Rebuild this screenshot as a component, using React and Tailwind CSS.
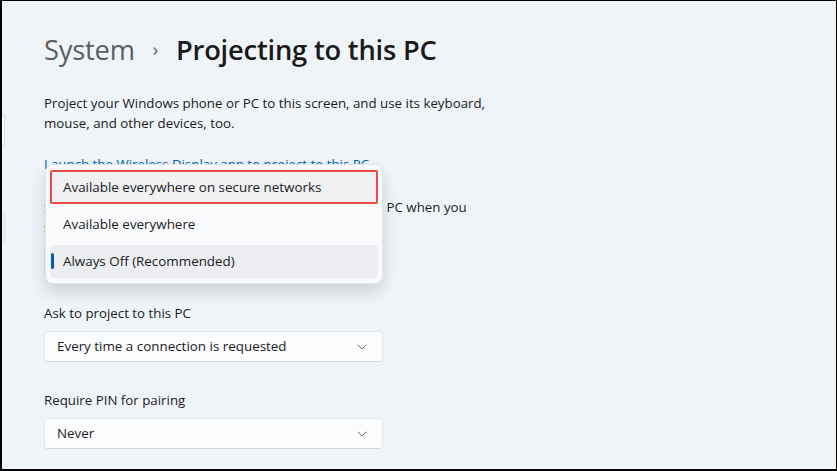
import React from "react";

const Chevron = () => (
  <svg width="10" height="6" viewBox="0 0 10 6" fill="none" className="text-[#6b6b6b]">
    <path d="M1 1l4 4 4-4" stroke="currentColor" strokeWidth="1" strokeLinecap="round" strokeLinejoin="round" />
  </svg>
);

const Select = ({ value }) => (
  <div className="w-[339px] h-[31px] flex items-center justify-between pl-[12px] pr-[15px] bg-[#fbfcfd] border border-[#e3e5e8] border-b-[#d4d6d9] rounded-[4px] text-[13.4px] text-[#1b1b1b]">
    <span>{value}</span>
    <Chevron />
  </div>
);

const App = () => {
  return (
    <div
      className="w-[837px] h-[471px] bg-black pl-[2px] pt-[1px] pr-[1px] pb-[2px]"
      style={{ fontFamily: '"Open Sans", "Noto Sans", sans-serif' }}
    >
      <div className="relative w-full h-full bg-[#eff4f9] overflow-hidden">
        {/* nav pane edge */}
        <div className="absolute left-0 top-[114px] w-[3px] h-[32px] border border-l-0 border-[#d6d9dd] bg-white rounded-r-[3px]"></div>
        <div className="absolute left-0 top-[210px] w-[4px] h-[32px] bg-[#e8ecf0] rounded-r-[3px]"></div>

        <div className="pl-[42px] pt-[30px]">
          <div className="flex items-center h-[38px] text-[27.3px] leading-none tracking-[-0.2px]">
            <span className="text-[#5d5d5d]">System</span>
            <span className="ml-[18px] mr-[18px] text-[#5d5d5d] text-[18px] pb-[2px]">›</span>
            <span className="text-[#1a1a1a] font-semibold">Projecting to this PC</span>
          </div>

          <div className="mt-[24px] text-[13.3px] leading-[20px] text-[#1b1b1b]">
            <p>Project your Windows phone or PC to this screen, and use its keyboard,</p>
            <p>mouse, and other devices, too.</p>
          </div>

          <p className="mt-[21px] text-[13.3px] leading-[20px] text-[#005fb8]">
            Launch the Wireless Display app to project to this PC
          </p>

          <div className="mt-[23px] text-[13.3px] leading-[20px] text-[#1b1b1b]">
            <p>Some Windows and Android devices can project to this PC when you</p>
            <p>say it's OK</p>
          </div>
          <div className="mt-[9px]">
            <Select value="Always Off (Recommended)" />
          </div>

          <p className="mt-[26px] text-[13.3px] leading-[20px] text-[#1b1b1b]">Ask to project to this PC</p>
          <div className="mt-[8px]">
            <Select value="Every time a connection is requested" />
          </div>

          <p className="mt-[28px] text-[13.3px] leading-[20px] text-[#1b1b1b]">Require PIN for pairing</p>
          <div className="mt-[8px]">
            <Select value="Never" />
          </div>
        </div>

        {/* open dropdown menu */}
        <div className="absolute left-[43px] top-[163px] w-[338px] pt-[5px] pb-[5px] px-[4px] bg-[#f9fafb] rounded-[8px] border border-[#e2e4e7] shadow-[0_8px_16px_rgba(0,0,0,0.14)] flex flex-col gap-[4px] text-[13.4px] text-[#1b1b1b]">
          <div className="h-[34px] flex items-center pl-[11px] bg-[#f0f1f3] border-2 border-[#ec4a45] rounded-[2px]">
            Available everywhere on secure networks
          </div>
          <div className="h-[33px] flex items-center pl-[13px]">Available everywhere</div>
          <div className="relative h-[33px] w-[328px] flex items-center pl-[13px] bg-[#eceef1] rounded-[4px]">
            <span className="absolute left-[1px] top-[8px] w-[3px] h-[16px] rounded-full bg-[#005fb8]"></span>
            Always Off (Recommended)
          </div>
        </div>
      </div>
    </div>
  );
};

export default App;
